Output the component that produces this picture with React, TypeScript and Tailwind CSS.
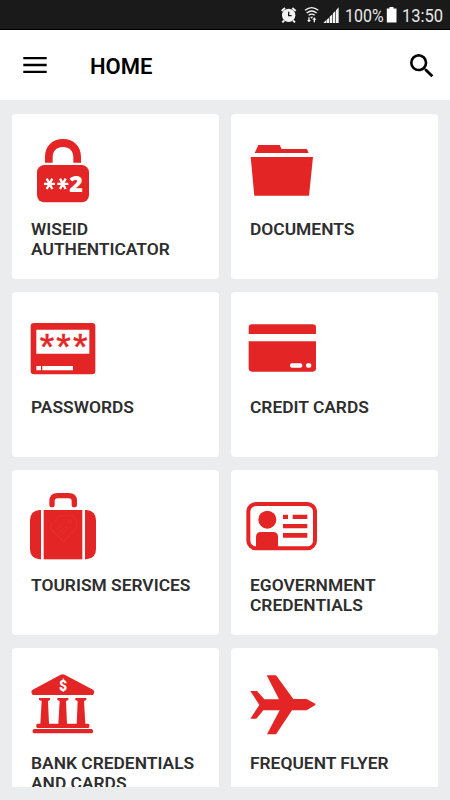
import React from 'react'
import { MdSearch } from 'react-icons/md'

const RED = '#e32526'

function LockIcon() {
  return (
    <svg width="100" height="95" viewBox="6 12 300 285" fill={RED}>
      <path d="M105 158V141C105 108 127 87 159 87S213 108 213 141V158H190V142C190 122 178 111 159 111S128 122 128 142V158Z" />
      <rect x="81" y="165" width="156" height="112" rx="22" />
      <path d="M102 221.500H135M110 206L127 237M127 206L110 237M142 221.500H175M150 206L167 237M167 206L150 237" stroke="#fff" strokeWidth="7" />
      <text x="178" y="246" fill="#fff" fontSize="70" fontWeight="800" fontFamily="Open Sans, sans-serif">2</text>
    </svg>
  )
}

function FolderIcon() {
  return (
    <svg width="100" height="95" viewBox="9 12 300 285" fill={RED}>
      <path d="M80 129L91 105H155L161 117H237L242 129Z" />
      <path d="M68 141H255L243 257H79Z" />
    </svg>
  )
}

function PasswordsIcon() {
  return (
    <svg width="100" height="95" viewBox="6 6 300 285" fill={RED}>
      <rect x="62" y="99" width="194" height="154" rx="10" />
      <path d="M79 119H238V191H79ZM79 228H93V241H79ZM97 228H189V241H97Z" fill="#fff" />
      <text x="89 139 189" y="211" fontSize="112" stroke={RED} strokeWidth="1.500" fontFamily="Liberation Sans, sans-serif">***</text>
    </svg>
  )
}

function CreditCardIcon() {
  return (
    <svg width="100" height="95" viewBox="9 6 300 285" fill={RED}>
      <path d="M62 132V113Q62 103 72 103H254Q264 103 264 113V132Z" />
      <path d="M62 154H264V235Q264 245 254 245H72Q62 245 62 235Z" />
      <rect x="186" y="220" width="37" height="13" rx="6" fill="#fff" />
      <rect x="234" y="220" width="16" height="13" rx="6" fill="#fff" />
    </svg>
  )
}

function SuitcaseIcon() {
  return (
    <svg width="100" height="95" viewBox="6 15 300 285" fill={RED}>
      <path d="M126 119V108Q126 92 143 92H176Q193 92 193 108V119" fill="none" stroke={RED} strokeWidth="16" strokeLinecap="round" />
      <path d="M93 135V283H88Q60 280 60 252V166Q60 138 88 135Z" />
      <rect x="101" y="135" width="116" height="148" />
      <path d="M225 135V283H230Q258 280 258 252V166Q258 138 230 135Z" />
      <path
        d="M122 182L147 153Q154 150 162 153L188 152L199 166V188L161 230L121 190ZM139 196L157 177M145 204L172 182M153 211L174 190"
        fill="none"
        stroke="#e63c38"
        strokeWidth="1.500"
      />
      <circle cx="180" cy="170" r="5" fill="none" stroke="#e63c38" strokeWidth="1.500" />
    </svg>
  )
}

function IdCardIcon() {
  return (
    <svg width="100" height="95" viewBox="9 15 300 285" fill={RED}>
      <rect x="61" y="117" width="200" height="133" rx="23" fill="none" stroke={RED} strokeWidth="12" />
      <circle cx="118" cy="164" r="27" />
      <path d="M84 249V216Q84 201 99 201H135Q150 201 150 216V249Z" />
      <path d="M165 149H180V162H165ZM194 149H238V162H194ZM165 177H238V190H165ZM165 204H238V218H165Z" />
    </svg>
  )
}

function BankIcon() {
  return (
    <svg width="100" height="95" viewBox="6 24 300 285" fill={RED}>
      <path d="M152 104Q158 101 164 104L249 149Q256 154 252 159L249 165H68L65 159Q61 154 68 149Z" />
      <path d="M87 174H120V180L114 183L117 252H91L95 183L87 180Z" />
      <path d="M142 174H175V180L168 183L171 252H145L149 183L142 180Z" />
      <path d="M196 174H229V180L222 183L226 252H200L203 183L196 180Z" />
      <rect x="79" y="251" width="159" height="13" rx="4" />
      <rect x="68" y="267" width="181" height="13" rx="5" />
      <text x="159" y="152" fill="#fff" fontSize="42" fontWeight="900" textAnchor="middle" fontFamily="Roboto, sans-serif">$</text>
    </svg>
  )
}

function PlaneIcon() {
  return (
    <svg width="100" height="95" viewBox="9 24 300 285" fill={RED}>
      <path d="M116 106H144L196 177H236L262 191V195L236 211H192L144 283H117L155 211H106L85 236H67L94 195L67 153H87L109 178H153Z" />
    </svg>
  )
}

const tiles = [
  { lines: ['WISEID', 'AUTHENTICATOR'], icon: <LockIcon /> },
  { lines: ['DOCUMENTS'], icon: <FolderIcon /> },
  { lines: ['PASSWORDS'], icon: <PasswordsIcon /> },
  { lines: ['CREDIT CARDS'], icon: <CreditCardIcon /> },
  { lines: ['TOURISM SERVICES'], icon: <SuitcaseIcon /> },
  { lines: ['EGOVERNMENT', 'CREDENTIALS'], icon: <IdCardIcon /> },
  { lines: ['BANK CREDENTIALS', 'AND CARDS'], icon: <BankIcon /> },
  { lines: ['FREQUENT FLYER'], icon: <PlaneIcon /> },
]

function StatusBar() {
  return (
    <div className="flex h-[30px] items-center border-b border-black bg-[#1a1a1a] pl-[281px] text-[19px] leading-none text-[#e8e8e8]">
      {/* alarm, wifi and signal strength */}
      <svg width="60" height="29" viewBox="33 0 180 87" fill="#f4f4f4" className="shrink-0">
        <circle cx="56" cy="46" r="20" />
        <path d="M35 33L45 24M77 33L67 24M43 61L37 67M69 61L75 67" stroke="#f4f4f4" strokeWidth="6" />
        <path d="M56 35V47H65" fill="none" stroke="#1a1a1a" strokeWidth="4" />
        <g fill="none" stroke="#f4f4f4" strokeWidth="4">
          <path d="M105 31Q125 15 145 31M110 39Q125 27 140 39M116 46Q125 39 134 46" />
        </g>
        <path d="M120 50H130L125 56ZM115 52H119V60H123L117 67L111 60H115ZM131 67H135V59H139L133 52L127 59H131Z" />
        <path d="M160 69L168 61V69ZM169.500 60L177 53V69H169.500ZM179 50L187 43V69H179ZM189 40L196 33V69H189ZM198 31L206 22V69H198Z" />
      </svg>
      <span className="ml-[4px] w-[39px] shrink-0 origin-left scale-x-[.84] pt-[2px]">100%</span>
      <svg width="12" height="29" viewBox="0 0 12 29" fill="#fff" className="ml-[2px] shrink-0">
        <path d="M3.500 7H7.500V8.500H10.500V22.500H.8V8.500H3.500Z" />
      </svg>
      <span className="ml-[4px] shrink-0 origin-left scale-x-[.87] pt-[2px]">13:50</span>
    </div>
  )
}

function Header() {
  return (
    <div className="flex h-[70px] items-center bg-white pl-[23px] text-black">
      <svg width="24" height="18" viewBox="0 0 24 18" fill="none" stroke="#000" strokeWidth="2.300">
        <path d="M.3 2.200H23.700M.3 9H23.700M.3 15.800H23.700" />
      </svg>
      <h1 className="ml-[43px] pt-[3px] text-[22px] font-semibold leading-none">HOME</h1>
      <MdSearch size={32} className="ml-auto mr-[12px] mt-px" />
    </div>
  )
}

export default function App() {
  return (
    <div className="h-[800px] w-[450px] overflow-hidden bg-[#ebecee] font-['Roboto',sans-serif]">
      <StatusBar />
      <Header />
      <div className="h-[687px] overflow-hidden px-3 pt-[14px]">
        <div className="grid grid-cols-[207px_207px] gap-x-3 gap-y-[13px]">
          {tiles.map((tile) => (
            <div key={tile.lines[0]} className="h-[165px] rounded-[4px] bg-white">
              {tile.icon}
              <div className="mt-[10px] pl-[19px] text-[17.4px] font-semibold leading-[20.3px] text-[#2e2e2e]">
                {tile.lines.map((line) => (
                  <p key={line} className="whitespace-nowrap">{line}</p>
                ))}
              </div>
            </div>
          ))}
        </div>
      </div>
    </div>
  )
}
